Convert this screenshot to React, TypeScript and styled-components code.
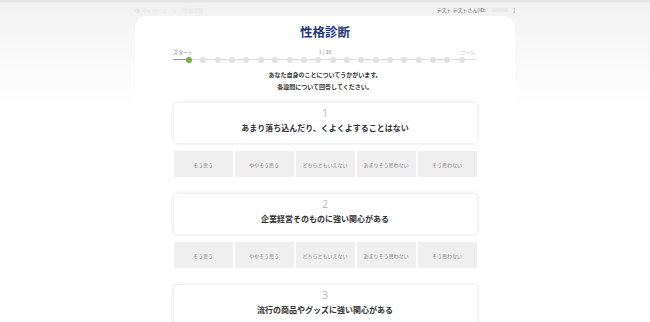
import React from "react";
import styled, { createGlobalStyle } from "styled-components";

const Global = createGlobalStyle`
  html, body { margin: 0; padding: 0; }
  body {
    font-family: "Noto Sans CJK JP", "Noto Sans", sans-serif;
    background: #fff;
  }
`;

const Page = styled.div`
  width: 650px;
  height: 322px;
  overflow: hidden;
  background: linear-gradient(to bottom, #e6e6e6 0px, #e6e6e6 2px, #f1f1f1 3px, #f7f7f7 40px, #ffffff 110px);
`;

const TopBar = styled.div`
  width: 380px;
  margin: 0 auto;
  height: 14px;
  display: flex;
  align-items: center;
  justify-content: space-between;
  padding-top: 2px;
  font-size: 5px;
  line-height: 1;
`;

const Crumb = styled.span`
  color: #e6e6e6;
  letter-spacing: 0.2px;
`;

const User = styled.span`
  color: #666;
  span { color: #ddd; }
`;

const Card = styled.div`
  width: 380px;
  margin: 0 auto;
  background: #fff;
  border-radius: 12px 12px 0 0;
  padding: 6px 0 0;
  display: flex;
  flex-direction: column;
  align-items: center;
`;

const Title = styled.h1`
  margin: 0;
  font-size: 12.5px;
  line-height: 20px;
  font-weight: 700;
  color: #233a78;
`;

const Progress = styled.div`
  width: 304px;
  margin-top: 6px;
`;

const Labels = styled.div`
  display: grid;
  grid-template-columns: 1fr auto 1fr;
  font-size: 5px;
  line-height: 8px;
  color: #888;
`;

const Goal = styled.span`
  text-align: right;
  color: #ccc;
  padding-right: 2px;
`;

const Track = styled.div`
  position: relative;
  height: 7px;
  display: flex;
  align-items: center;
  padding-left: 13px;
  gap: 8.37px;
  &::before {
    content: "";
    position: absolute;
    left: 0;
    right: 0;
    top: 3px;
    height: 1px;
    background: #e0e0e0;
  }
  &::after {
    content: "";
    position: absolute;
    left: 0;
    width: 16px;
    top: 3px;
    height: 1px;
    background: #7ab648;
  }
`;

const Dot = styled.span<{ $active?: boolean }>`
  position: relative;
  z-index: 1;
  width: 6px;
  height: 6px;
  border-radius: 50%;
  background: ${(p) => (p.$active ? "#6cb33f" : "#e0e0e0")};
  flex: none;
`;

const Intro = styled.p`
  margin: 6px 0 0;
  font-size: 6px;
  line-height: 12px;
  color: #333;
  font-weight: 700;
  text-align: center;
`;

const List = styled.div`
  width: 303px;
  margin-top: 10px;
  display: flex;
  flex-direction: column;
`;

const Question = styled.div`
  display: flex;
  flex-direction: column;
  margin-bottom: 17px;
`;

const QCard = styled.div`
  height: 40px;
  box-sizing: border-box;
  padding-top: 4px;
  background: #fff;
  border-radius: 3px;
  box-shadow: 0 0 4px rgba(0, 0, 0, 0.14);
  display: flex;
  flex-direction: column;
  align-items: center;
`;

const QNum = styled.div`
  font-family: "Noto Sans", sans-serif;
  font-size: 10.5px;
  line-height: 12px;
  color: #bbb;
`;

const QText = styled.div`
  margin-top: 3px;
  font-size: 8px;
  line-height: 12px;
  font-weight: 700;
  color: #333;
`;

const Options = styled.div`
  margin-top: 8px;
  display: grid;
  grid-template-columns: repeat(5, 1fr);
  gap: 2px;
`;

const Option = styled.button`
  height: 26px;
  border: none;
  background: #efefef;
  font-family: inherit;
  font-size: 5px;
  color: #888;
  padding: 0;
`;

const options = ["そう思う", "ややそう思う", "どちらともいえない", "あまりそう思わない", "そう思わない"];
const questions = [
  "あまり落ち込んだり、くよくよすることはない",
  "企業経営そのものに強い関心がある",
  "流行の商品やグッズに強い関心がある",
];

export default function App() {
  return (
    <Page>
      <Global />
      <TopBar>
        <Crumb>● マイページ　＞　性格診断</Crumb>
        <User>
          テスト テストさん[ID: <span>　000000　</span>]
        </User>
      </TopBar>
      <Card>
        <Title>性格診断</Title>
        <Progress>
          <Labels>
            <span>スタート</span>
            <span>1 / 20</span>
            <Goal>ゴール</Goal>
          </Labels>
          <Track>
            {Array.from({ length: 20 }).map((_, i) => (
              <Dot key={i} $active={i === 0} />
            ))}
          </Track>
        </Progress>
        <Intro>
          あなた自身のことについてうかがいます。
          <br />
          各設問について回答してください。
        </Intro>
        <List>
          {questions.map((q, i) => (
            <Question key={i}>
              <QCard>
                <QNum>{i + 1}</QNum>
                <QText>{q}</QText>
              </QCard>
              <Options>
                {options.map((o) => (
                  <Option key={o}>{o}</Option>
                ))}
              </Options>
            </Question>
          ))}
        </List>
      </Card>
    </Page>
  );
}
